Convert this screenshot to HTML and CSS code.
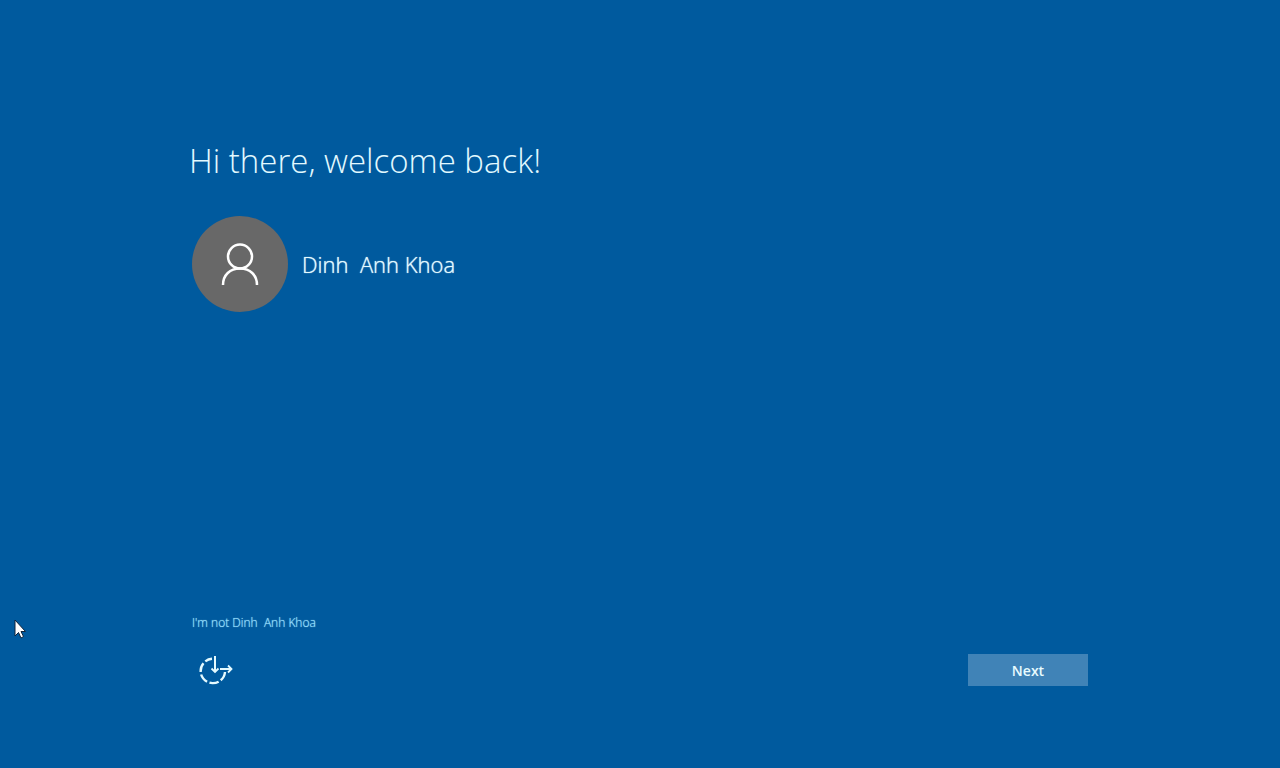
FILE: index.html
```
<!DOCTYPE html>
<html lang="en">
  <head>
    <meta charset="UTF-8" />
    <meta name="viewport" content="width=device-width, initial-scale=1.0" />
    <title>Welcome back</title>
    <link rel="stylesheet" href="styles.css">
  </head>
  <body>
    <main class="screen">
      <h1 class="title">Hi there, welcome back!</h1>
      <div class="user">
        <div class="avatar">
          <svg width="40" height="44" viewBox="0 0 40 44" fill="none" stroke="#fff" stroke-width="2.5">
            <circle cx="20" cy="14.5" r="12" />
            <path d="M3 43C3 33 10 26.500 20 26.500S37 33 37 43" />
          </svg>
        </div>
        <span class="user-name">Dinh&nbsp; Anh Khoa</span>
      </div>
      <div class="bottom">
        <a class="not-me" href="#">I'm not Dinh&nbsp; Anh Khoa</a>
        <div class="actions">
          <button class="access-btn" type="button" aria-label="Ease of access">
            <svg width="36" height="32" viewBox="0 0 36 32" fill="none" stroke="#e4faff">
              <path d="M27 18A12.200 12.200 0 1 1 14 4.800" stroke-width="2.400" stroke-dasharray="9.500 2.500" />
              <path d="M17 2V17M22 15H33" stroke-width="2" />
              <path d="M13.500 14.500L17 18L20.500 14.500M30 11.500L33.500 15L30 18.500" stroke-width="1.800" />
            </svg>
          </button>
          <button class="next-btn" type="button">Next</button>
        </div>
      </div>
    </main>
    <svg class="cursor" width="14" height="20" viewBox="0 0 14 20">
      <path d="M2 1V17L5.500 13.500L8 19L10.500 17.500L8 12.500H12.500Z" fill="#fff" stroke="#10243c" />
    </svg>
  </body>
</html>
```
FILE: styles.css
```
* {
  margin: 0;
  padding: 0;
  box-sizing: border-box;
}

body {
  background-color: #005a9e;
  color: #e2f9ff;
  font-family: "Open Sans", "Noto Sans", sans-serif;
}

.screen {
  display: flex;
  flex-direction: column;
  min-height: 100vh;
  padding: 137px 15% 82px;
}

.title {
  margin-left: -3px;
  font-size: 33px;
  font-weight: 300;
  line-height: 48px;
}

.user {
  display: flex;
  align-items: center;
  gap: 14px;
  margin-top: 31px;
}

.avatar {
  display: flex;
  align-items: center;
  justify-content: center;
  width: 96px;
  height: 96px;
  border-radius: 50%;
  background-color: #686868;
}

.user-name {
  font-size: 22px;
  font-weight: 300;
  line-height: 32px;
  text-shadow: 0 0 1px #e2f9ff;
}

.bottom {
  display: flex;
  flex-direction: column;
  gap: 23px;
  margin-top: auto;
}

.not-me {
  align-self: flex-start;
  color: #9be0ff;
  font-size: 12px;
  font-weight: 300;
  line-height: 16px;
  text-decoration: none;
  text-shadow: 0 0 1px #9be0ff;
}

.actions {
  display: flex;
  align-items: center;
  justify-content: space-between;
}

.access-btn {
  width: 48px;
  height: 32px;
  border: none;
  background: none;
  cursor: pointer;
}

.access-btn svg {
  display: block;
  margin: 0 auto;
}

.next-btn {
  width: 120px;
  height: 32px;
  border: none;
  background-color: #4083b7;
  color: #e8fbff;
  font-family: inherit;
  font-size: 14px;
  font-weight: 600;
  cursor: pointer;
}

.next-btn:hover {
  background-color: #5a96c4;
}

/* mouse pointer, floats over the page */
.cursor {
  position: absolute;
  top: 619px;
  left: 13px;
  pointer-events: none;
}
```
